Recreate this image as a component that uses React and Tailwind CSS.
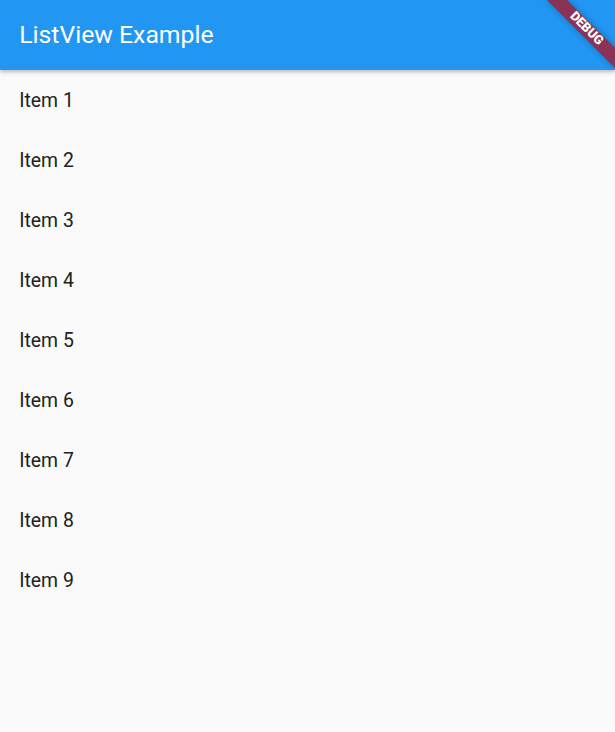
export default function App() {
  const items = Array.from({ length: 9 }, (_, i) => `Item ${i + 1}`);

  return (
    <div className="relative w-full h-[732px] overflow-hidden bg-[#fafafa] font-['Roboto',sans-serif]">
      {/* App bar */}
      <div className="relative z-10 h-[70px] bg-[#2196f3] flex items-center px-[19.2px] shadow-[0_2px_4px_rgba(0,0,0,0.25)]">
        <h1 className="text-white text-[24.75px] leading-none font-normal">ListView Example</h1>
      </div>

      {/* List */}
      <div className="pt-[1px]">
        {items.map((item) => (
          <div key={item} className="h-[60px] flex items-center px-[19.2px] text-[19.4px] text-[#212121]">
            {item}
          </div>
        ))}
      </div>

      {/* Debug banner */}
      <div className="absolute top-0 right-0 w-0 h-0 z-20 origin-top-left rotate-45">
        <div className="absolute left-[-48px] top-[33.6px] w-[96px] h-[14.4px] bg-[#893356] shadow-[0_0_6px_rgba(0,0,0,0.3)] flex items-center justify-center">
          <span className="text-white text-[12.8px] font-black leading-none">DEBUG</span>
        </div>
      </div>
    </div>
  );
}
